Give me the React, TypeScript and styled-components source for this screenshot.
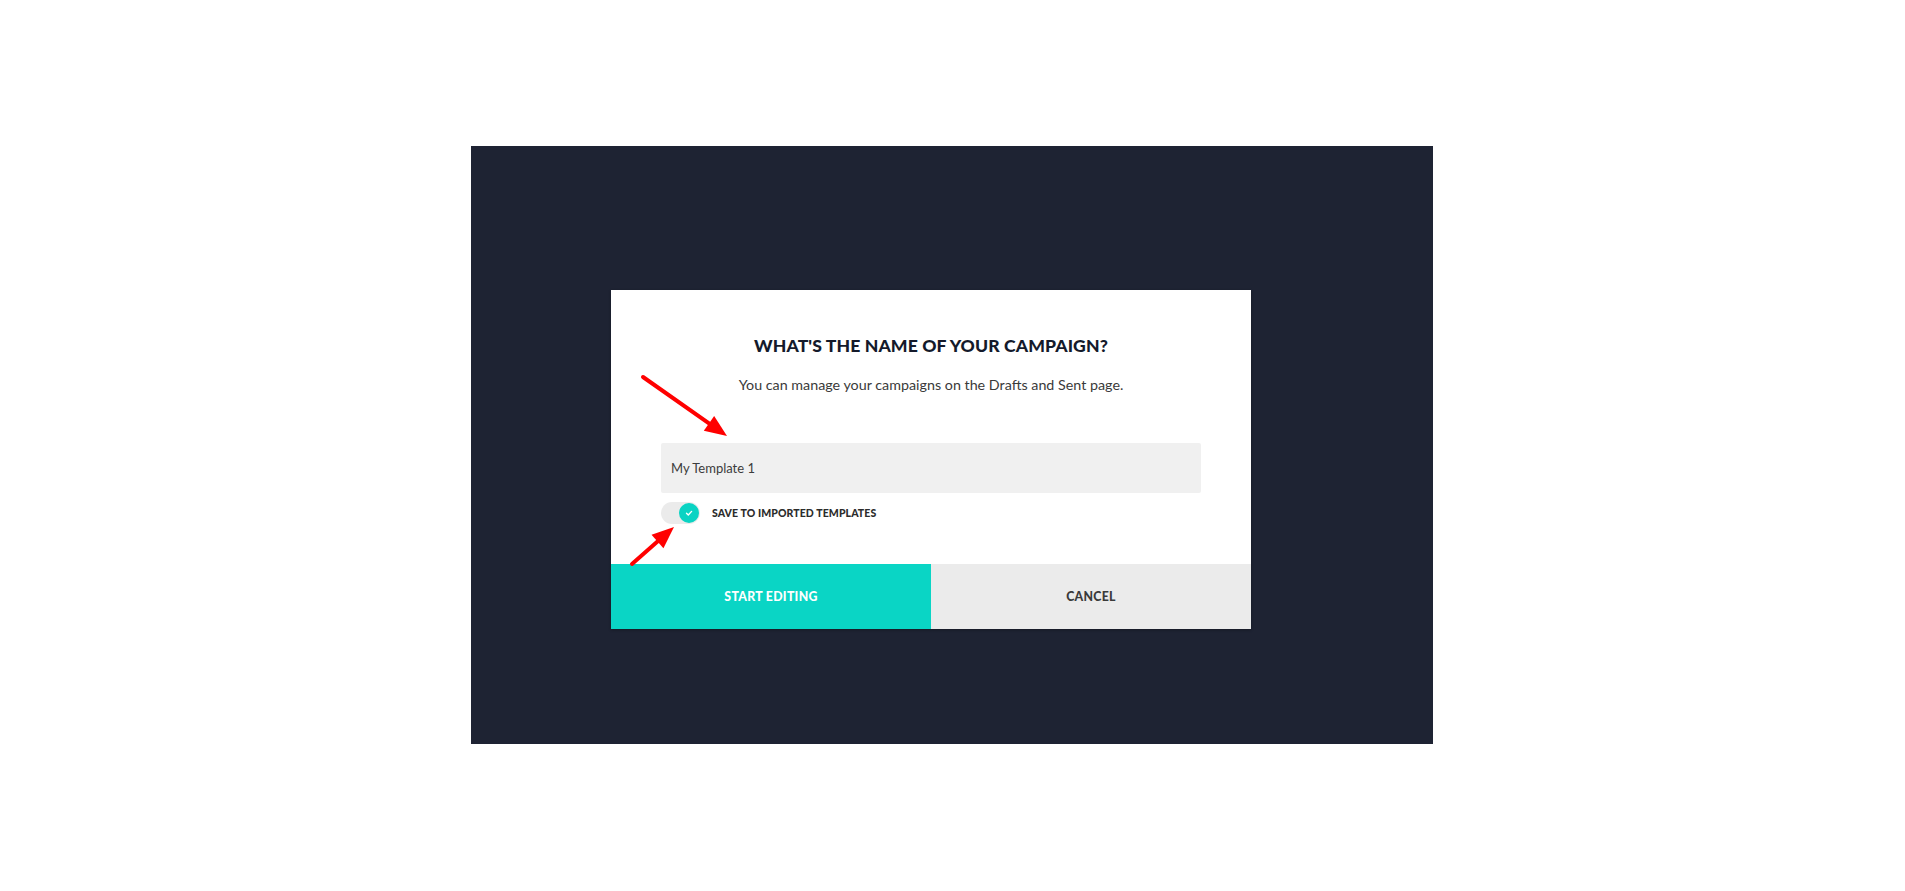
import React from "react";
import styled, { createGlobalStyle } from "styled-components";

const GlobalStyle = createGlobalStyle`
  body {
    margin: 0;
    background: #ffffff;
    font-family: Lato, "Noto Sans", sans-serif;
  }
`;

const Stage = styled.div`
  position: relative;
  width: 1905px;
  height: 891px;
  padding-top: 146px;
  box-sizing: border-box;
`;

const Backdrop = styled.div`
  margin-left: 471px;
  width: 962px;
  height: 598px;
  box-sizing: border-box;
  padding: 144px 182px 115px 140px;
  background: #1e2333;
`;

const Modal = styled.div`
  width: 640px;
  height: 339px;
  background: #ffffff;
  display: flex;
  flex-direction: column;
  box-shadow: 0 1px 3px rgba(0, 0, 0, 0.3);
`;

const Body = styled.div`
  flex: 1;
  padding: 44px 50px 0;
  display: flex;
  flex-direction: column;
  align-items: center;
`;

const Title = styled.h2`
  margin: 0;
  font-size: 17.6px;
  line-height: 24px;
  font-weight: 900;
  color: #141a2b;
  letter-spacing: 0.1px;
`;

const Subtitle = styled.p`
  margin: 17px 0 0;
  font-size: 14.3px;
  line-height: 20px;
  color: #3a3a3a;
`;

const NameInput = styled.input`
  margin-top: 48px;
  width: 100%;
  height: 50px;
  box-sizing: border-box;
  border: none;
  border-radius: 2px;
  background: #f0f0f0;
  padding: 0 10px;
  font-family: Lato, "Noto Sans", sans-serif;
  font-size: 13px;
  color: #3c3c3c;
  outline: none;
`;

const ToggleRow = styled.label`
  align-self: flex-start;
  margin-top: 9px;
  display: flex;
  align-items: center;
  gap: 12px;
`;

const Track = styled.span`
  position: relative;
  width: 39px;
  height: 22px;
  border-radius: 11px;
  background: #ebebeb;
  display: flex;
  align-items: center;
  justify-content: flex-end;
  padding: 0 1px;
  box-sizing: border-box;
`;

const Thumb = styled.span`
  width: 20px;
  height: 20px;
  border-radius: 50%;
  background: #0ad3c3;
  display: flex;
  align-items: center;
  justify-content: center;
`;

const ToggleLabel = styled.span`
  font-size: 10.5px;
  font-weight: 900;
  color: #2c2c2c;
  letter-spacing: 0.1px;
`;

const Footer = styled.div`
  display: flex;
  height: 65px;
`;

const FooterButton = styled.button<{ $primary?: boolean }>`
  flex: 1;
  border: none;
  margin: 0;
  font-family: Lato, "Noto Sans", sans-serif;
  font-size: 12.3px;
  font-weight: 900;
  letter-spacing: 0.3px;
  background: ${(p) => (p.$primary ? "#0ad5c5" : "#ebebeb")};
  color: ${(p) => (p.$primary ? "#ffffff" : "#3a3a3a")};
  cursor: pointer;
`;

const Annotations = styled.svg`
  position: absolute;
  left: 0;
  top: 0;
  pointer-events: none;
`;

const Arrow = ({ x1, y1, x2, y2 }: { x1: number; y1: number; x2: number; y2: number }) => {
  const a = Math.atan2(y2 - y1, x2 - x1);
  const len = 22;
  const w = 9;
  const bx = x2 - len * Math.cos(a);
  const by = y2 - len * Math.sin(a);
  const px = -Math.sin(a) * w;
  const py = Math.cos(a) * w;
  return (
    <g>
      <line x1={x1} y1={y1} x2={bx} y2={by} stroke="#ff0000" strokeWidth={4} strokeLinecap="round" />
      <polygon points={`${x2},${y2} ${bx + px},${by + py} ${bx - px},${by - py}`} fill="#ff0000" />
    </g>
  );
};

export default function App() {
  return (
    <>
      <GlobalStyle />
      <Stage>
        <Backdrop>
          <Modal>
            <Body>
              <Title>WHAT'S THE NAME OF YOUR CAMPAIGN?</Title>
              <Subtitle>You can manage your campaigns on the Drafts and Sent page.</Subtitle>
              <NameInput defaultValue="My Template 1" />
              <ToggleRow>
                <Track>
                  <Thumb>
                    <svg width="10" height="10" viewBox="0 0 10 10">
                      <path d="M2.5 5.2 L4.3 7 L7.6 3.4" fill="none" stroke="#ffffff" strokeWidth="1.4" strokeLinecap="round" strokeLinejoin="round" />
                    </svg>
                  </Thumb>
                </Track>
                <ToggleLabel>SAVE TO IMPORTED TEMPLATES</ToggleLabel>
              </ToggleRow>
            </Body>
            <Footer>
              <FooterButton $primary>START EDITING</FooterButton>
              <FooterButton>CANCEL</FooterButton>
            </Footer>
          </Modal>
        </Backdrop>
        <Annotations width="1905" height="891">
          <Arrow x1={643} y1={377} x2={727} y2={436} />
          <Arrow x1={632} y1={564} x2={674} y2={527} />
        </Annotations>
      </Stage>
    </>
  );
}
